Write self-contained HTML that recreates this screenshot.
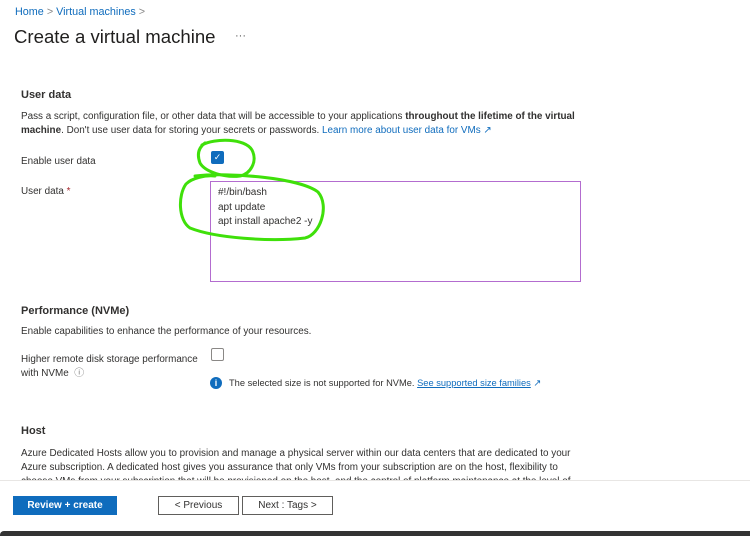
<!DOCTYPE html>
<html><head><style>
*{margin:0;padding:0;box-sizing:border-box}
body{width:750px;height:536px;background:#fff;font-family:"Liberation Sans",sans-serif;color:#323130;font-size:9.9px;position:relative;overflow:hidden}
.a{position:absolute;white-space:nowrap}
.l{color:#0f6cbd}
.h{font-size:11px;font-weight:600;color:#323130}
.btn{position:absolute;height:19px;border:1px solid #605e5c;font-size:10px;display:flex;align-items:center;justify-content:center;background:#fff}
</style></head><body>
<div class="a" style="left:15px;top:6px;font-size:10.8px"><span class="l">Home</span> <span style="color:#888">&gt;</span> <span class="l">Virtual machines</span> <span style="color:#888">&gt;</span></div>
<div class="a" style="left:14px;top:26px;font-size:18.6px;color:#201f1e">Create a virtual machine</div>
<div class="a" style="left:235px;top:30px;font-size:11px;color:#555">···</div>

<div class="a h" style="left:21px;top:89px">User data</div>
<div class="a" style="left:21px;top:111px">Pass a script, configuration file, or other data that will be accessible to your applications <b>throughout the lifetime of the virtual</b></div>
<div class="a" style="left:21px;top:125px"><b>machine</b>. Don't use user data for storing your secrets or passwords. <span class="l">Learn more about user data for VMs ↗</span></div>
<div class="a" style="left:21px;top:156px">Enable user data</div>
<div class="a" style="left:211px;top:151px;width:13px;height:13px;background:#0f6cbd;border-radius:2px;color:#fff;font-size:9px;text-align:center;line-height:13px">✓</div>
<div class="a" style="left:21px;top:186px">User data <span style="color:#a4262c">*</span></div>
<div class="a" style="left:210px;top:181px;width:371px;height:101px;border:1px solid #b36ccf"></div>
<div class="a" style="left:218px;top:186px;line-height:14.5px;font-size:10px">#!/bin/bash<br>apt update<br>apt install apache2 -y</div>

<div class="a h" style="left:21px;top:305px">Performance (NVMe)</div>
<div class="a" style="left:21px;top:326px">Enable capabilities to enhance the performance of your resources.</div>
<div class="a" style="left:21px;top:353px;line-height:14px">Higher remote disk storage performance<br>with NVMe &nbsp;<span style="color:#777">ⓘ</span></div>
<div class="a" style="left:211px;top:348px;width:13px;height:13px;border:1px solid #8a8886;border-radius:2px"></div>
<div class="a" style="left:210px;top:377px;width:12px;height:12px;border-radius:50%;background:#0f6cbd;color:#fff;font-size:9px;font-weight:bold;text-align:center;line-height:12px">i</div>
<div class="a" style="left:229px;top:378px;font-size:9.3px">The selected size is not supported for NVMe. <span class="l" style="text-decoration:underline">See supported size families</span> <span class="l">↗</span></div>

<div class="a h" style="left:21px;top:425px">Host</div>
<div class="a" style="left:21px;top:447px;line-height:14px">Azure Dedicated Hosts allow you to provision and manage a physical server within our data centers that are dedicated to your<br>Azure subscription. A dedicated host gives you assurance that only VMs from your subscription are on the host, flexibility to<br>choose VMs from your subscription that will be provisioned on the host, and the control of platform maintenance at the level of</div>
<div class="a" style="left:0;top:480px;width:750px;height:56px;background:#fff;border-top:1px solid #e8e6e4"></div>
<div class="a" style="left:13px;top:496px;width:104px;height:19px;background:#0f6cbd;color:#fff;font-size:10px;font-weight:600;display:flex;align-items:center;justify-content:center">Review + create</div>
<div class="btn" style="left:158px;top:496px;width:81px">&lt; Previous</div>
<div class="btn" style="left:242px;top:496px;width:91px">Next : Tags &gt;</div>
<div class="a" style="left:0;top:531px;width:750px;height:5px;background:#333;border-top-left-radius:4px"></div>

<svg class="a" style="left:0;top:0" width="750" height="536" fill="none" stroke="#3fe00a" stroke-width="3" stroke-linecap="round">
<path d="M202 145 C215 138 245 138 252 150 C258 162 250 174 240 176 C225 178 205 172 200 163 C197 155 198 148 205 143"/>
<path d="M195 176 C230 172 300 178 318 192 C330 206 320 235 305 238 C270 242 215 238 190 228 C178 220 178 195 186 184 C192 178 205 175 215 176"/>
</svg>
</body></html>
